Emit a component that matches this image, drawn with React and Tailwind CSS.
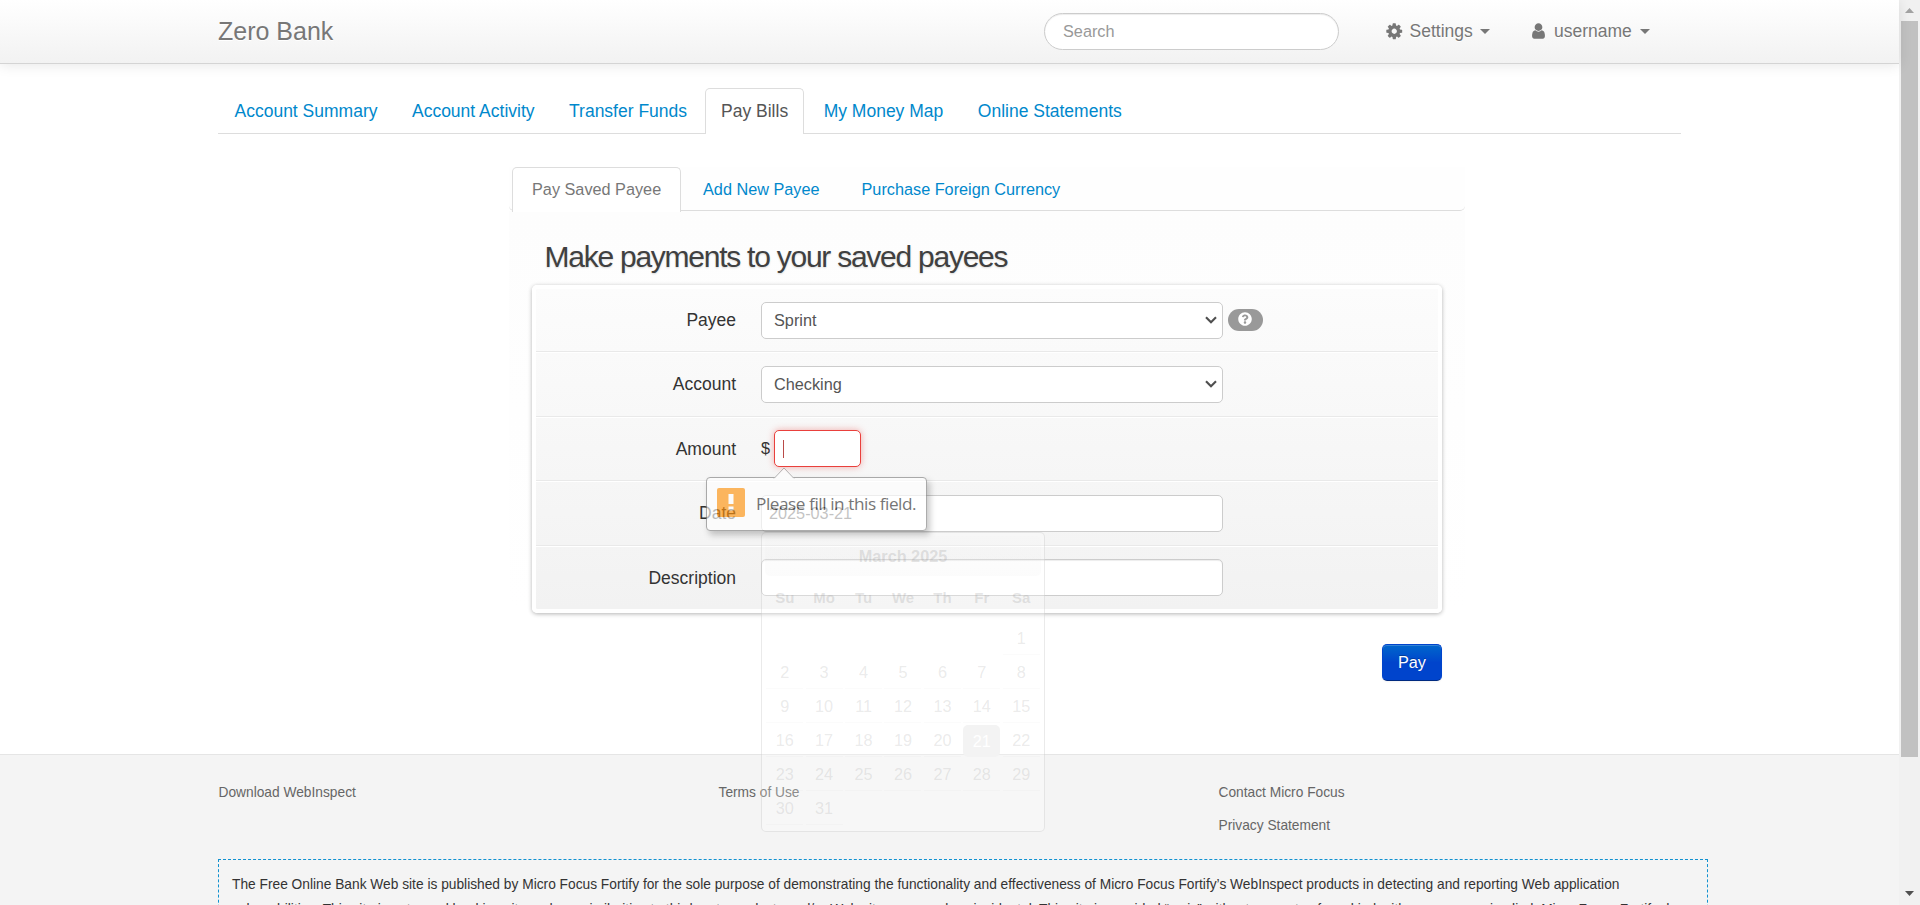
import React from "react";
import { FaQuestionCircle } from "react-icons/fa";

const days = ["Su", "Mo", "Tu", "We", "Th", "Fr", "Sa"];
const cells = [...Array(6).fill(null), ...Array.from({ length: 31 }, (_, i) => i + 1)];

const CogIcon = () => (
  <svg width="18.5" height="18.5" viewBox="0 0 1792 1792" fill="currentColor" className="shrink-0">
    <path d="M1152 896q0-106-75-181t-181-75-181 75-75 181 75 181 181 75 181-75 75-181zm512-109v222q0 12-8 23t-20 13l-185 28q-19 54-39 91 35 50 107 138 10 12 10 25t-9 23q-27 37-99 108t-94 71q-12 0-26-9l-138-108q-44 23-91 38-16 136-29 186-7 28-36 28h-222q-14 0-24.5-8.5t-11.5-21.5l-28-184q-49-16-90-37l-141 107q-10 9-25 9-14 0-25-11-126-114-165-168-7-10-7-23 0-12 8-23 15-21 51-66.5t54-70.5q-27-50-41-99l-183-27q-13-2-21-12.5t-8-23.5v-222q0-12 8-23t19-13l186-28q14-46 39-92-40-57-107-138-10-12-10-24 0-10 9-23 26-36 98.5-107.5t94.5-71.5q13 0 26 10l138 107q44-23 91-38 16-136 29-186 7-28 36-28h222q14 0 24.5 8.5t11.5 21.5l28 184q49 16 90 37l142-107q9-9 24-9 13 0 25 10 129 119 165 170 7 8 7 22 0 12-8 23-15 21-51 66.5t-54 70.5q26 50 41 98l183 28q13 2 21 12.5t8 23.5z" />
  </svg>
);

const UserIcon = () => (
  <svg width="15" height="18" viewBox="176 0 1440 1792" fill="currentColor" className="shrink-0">
    <path d="M1536 1399q0 109-62.5 187t-150.5 78h-854q-88 0-150.5-78t-62.5-187q0-85 8.5-160.5t31.5-152 58.5-131 94-89 134.5-34.5q131 128 313 128t313-128q76 0 134.5 34.5t94 89 58.5 131 31.5 152 8.5 160.5zm-256-887q0 159-112.5 271.5t-271.5 112.5-271.5-112.5-112.5-271.5 112.5-271.5 271.5-112.5 271.5 112.5 112.5 271.5z" />
  </svg>
);

const Caret = () => (
  <span className="h-0 w-0 border-x-[5px] border-t-[5px] border-x-transparent border-t-[#777]" />
);

const Chevron = () => (
  <svg width="12" height="8" viewBox="0 0 12 8" fill="none" stroke="#4f4f4f" strokeWidth="2.1">
    <path d="M1 1.2 6 6.2 11 1.2" />
  </svg>
);

function NavTab({ label, active }) {
  return (
    <li
      className={
        active
          ? "mr-[3px] h-[46px] rounded-t-[5px] border border-b-0 border-[#ddd] bg-white px-[15px] pt-[9.5px] text-[#555]"
          : "mr-[2.5px] h-[45px] border border-b-0 border-transparent pr-[14.5px] pl-[15.5px] pt-[9.5px] text-[#0088cc]"
      }
    >
      {label}
    </li>
  );
}

function SubTab({ label, active }) {
  return (
    <li
      className={
        active
          ? "h-[45px] w-[169px] rounded-t-[5px] border border-b-0 border-[#ddd] bg-white pl-[19px] pt-[9px] text-[#777]"
          : "h-[44px] border border-b-0 border-transparent pr-[19px] pl-[21px] pt-[9px] text-[#0088cc]"
      }
    >
      {label}
    </li>
  );
}

function Row({ label, first, last, children }) {
  return (
    <div
      className={
        "flex items-center " +
        (first ? "h-[63px] " : "border-t border-t-white ") +
        (first ? "" : last ? "h-[63px] " : "h-[64.5px] ") +
        (last ? "" : "border-b border-b-[#e9e9e9]")
      }
    >
      <label className="w-[200px] pt-[1px] text-right text-[17.5px] leading-[25px] text-[#333]">{label}</label>
      <div className="ml-[25px] flex items-center text-[16.25px] text-[#555]">{children}</div>
    </div>
  );
}

const Select = ({ value }) => (
  <div className="flex h-[37px] w-[462px] items-center justify-between rounded-[5px] border border-[#ccc] bg-white pr-[5px] pl-[12px]">
    <span className="pt-[1px]">{value}</span>
    <Chevron />
  </div>
);

function Calendar() {
  return (
    <div className="absolute top-[532px] left-[761px] z-10 h-[300px] w-[284px] rounded-[5px] border border-[#bbb]/30 bg-white/25 px-[3px] pt-[3px] text-[16.25px]">
      <div className="flex h-[40px] items-center justify-center rounded-[5px] bg-linear-to-b from-[#888]/1 to-[#888]/3 pt-[1px] font-bold text-[#999]/27">
        March 2025
      </div>
      <div className="mt-[3px] grid h-[37px] grid-cols-7 items-center text-center text-[15px] font-bold text-[#999]/25">
        {days.map((d) => (
          <span key={d}>{d}</span>
        ))}
      </div>
      <div className="mt-[6px] grid auto-rows-[34px] grid-cols-7 text-center">
        {cells.map((d, i) => (
          <div key={i} className="flex items-center justify-center">
            {d && (
              <span
                className={
                  d === 21
                    ? "flex h-[32px] w-[37px] items-center justify-center rounded-[5px] bg-[#f3f3f3] text-white"
                    : "flex h-[32px] w-[37px] items-center justify-center border-b border-[#888]/3 text-[#888]/18"
                }
              >
                {d}
              </span>
            )}
          </div>
        ))}
      </div>
    </div>
  );
}

function Tooltip() {
  return (
    <div className="absolute top-[477px] left-[706px] z-20 flex h-[54px] w-[221px] items-center rounded-[4px] border border-[#808080] bg-white opacity-65 shadow-[3px_4px_6px_rgba(0,0,0,0.33)]">
      <svg className="absolute top-[-11px] left-[66px]" width="22" height="12" viewBox="0 0 22 12">
        <path d="M1 11.5 11 1 21 11.5" fill="#fff" stroke="#909090" />
        <path d="M1.5 11.5h19" stroke="#fff" />
      </svg>
      <svg className="mb-[3px] ml-[10px] shrink-0" width="28" height="29" viewBox="0 0 28 29">
        <rect width="28" height="29" rx="2" fill="#ff930e" />
        <rect x="11.5" y="6" width="5" height="10" fill="#fff" />
        <rect x="11.5" y="18.5" width="5" height="4" fill="#fff" />
      </svg>
      <span className="ml-[11px] whitespace-nowrap font-['Open_Sans',sans-serif] text-[17.2px] leading-[22px] tracking-[-0.44px] text-[#2c2c2c]">
        Please fill in this field.
      </span>
    </div>
  );
}

export default function App() {
  return (
    <div className="relative flex h-[905px] w-[1920px] overflow-hidden bg-white font-['Liberation_Sans',Arial,sans-serif] text-[17.5px] leading-[25px] text-[#333]">
      <div className="flex w-[1899px] flex-col">
        <header className="relative h-[64px] shrink-0 border-b border-[#d4d4d4] bg-linear-to-b from-white to-[#f2f2f2] shadow-[0_1px_13px_rgba(0,0,0,0.1)]">
          <div className="mx-auto flex h-[62px] w-[1463px] items-center text-[#777]">
            <span className="w-[826px] text-[25px] [text-shadow:0_1px_0_#fff]">Zero Bank</span>
            <div className="mt-[1px] flex h-[37px] w-[295px] items-center rounded-full border border-[#ccc] bg-white pl-[18px] text-[16.25px] text-[#999] shadow-[inset_0_1px_1px_rgba(0,0,0,0.075)]">
              Search
            </div>
            <div className="ml-[46px] flex items-center [text-shadow:0_1px_0_#fff]">
              <CogIcon />
              <span className="ml-[6px] w-[64px]">Settings</span>
              <span className="ml-[6.5px] flex">
                <Caret />
              </span>
            </div>
            <div className="ml-[41px] flex items-center [text-shadow:0_1px_0_#fff]">
              <UserIcon />
              <span className="ml-[8px] w-[78px]">username</span>
              <span className="ml-[8px] flex">
                <Caret />
              </span>
            </div>
          </div>
        </header>

        <main className="mx-auto h-[690px] w-[1463px] shrink-0 pt-[24px]">
          <ul className="flex h-[46px] border-b border-[#ddd]">
            <NavTab label="Account Summary" />
            <NavTab label="Account Activity" />
            <NavTab label="Transfer Funds" />
            <NavTab label="Pay Bills" active />
            <NavTab label="My Money Map" />
            <NavTab label="Online Statements" />
          </ul>

          <section className="mt-[33px] ml-[291px] w-[956px]">
            <ul className="flex h-[44px] rounded-b-[5px] border-b border-[#ddd] bg-[#fefefe] pl-[3px] text-[16.25px]">
              <SubTab label="Pay Saved Payee" active />
              <SubTab label="Add New Payee" />
              <SubTab label="Purchase Foreign Currency" />
            </ul>
            <div className="bg-linear-to-b from-[#fdfdfd] to-white px-[23px] pt-[21px]">
              <h2 className="mb-[3px] h-[50px] pl-[12.5px] text-[30px] leading-[50px] tracking-[-1.25px] text-[#404040] [text-shadow:0_1px_2px_rgba(0,0,0,0.15)]">
                Make payments to your saved payees
              </h2>
              <div className="h-[328px] w-[910px] rounded-[5px] border-4 border-white bg-linear-to-b from-[#fcfcfc] to-[#f2f2f2] bg-clip-padding shadow-[0_1px_4px_rgba(0,0,0,0.3)]">
                <Row label="Payee" first>
                  <Select value="Sprint" />
                  <span className="ml-[5px] flex h-[22px] w-[35px] items-start justify-center rounded-full bg-[#999] pt-[3px] pr-[1px] text-white">
                    <FaQuestionCircle size={14} />
                  </span>
                </Row>
                <Row label="Account">
                  <Select value="Checking" />
                </Row>
                <Row label="Amount">
                  <span className="w-[13px] pb-[1px] text-[#333]">$</span>
                  <div className="flex h-[37px] w-[87px] items-center rounded-[5px] border border-[#e9403c] bg-white pl-[8px] shadow-[0_0_7px_rgba(233,60,55,0.4)]">
                    <span className="h-[18px] w-px bg-[#b94a48]" />
                  </div>
                </Row>
                <Row label="Date">
                  <div className="flex h-[37px] w-[462px] items-center rounded-[5px] border border-[#ccc] bg-white pl-[7px]">2025-03-21</div>
                </Row>
                <Row label="Description" last>
                  <div className="h-[37px] w-[462px] rounded-[5px] border border-[#ccc] bg-white shadow-[inset_0_1px_1px_rgba(0,0,0,0.075)]" />
                </Row>
              </div>
            </div>
            <button className="mt-[31px] ml-[873px] block h-[37px] w-[60px] rounded-[5px] border border-[#0044cc] border-b-[#002a80] bg-linear-to-b from-[#0066cc] to-[#0044cc] to-50% text-[16.25px] text-white shadow-[inset_0_1px_0_rgba(255,255,255,0.2),0_1px_2px_rgba(0,0,0,0.05)] [text-shadow:0_-1px_0_rgba(0,0,0,0.25)]">
              Pay
            </button>
          </section>
        </main>

        <footer className="grow border-t border-[#e5e5e5] bg-[#f4f4f4] pt-[21px] text-[13.75px]">
          <div className="ml-[218.5px] grid h-[83px] grid-cols-[500px_500px_auto] leading-[33px] text-[#666]">
            <span>Download WebInspect</span>
            <span>Terms of Use</span>
            <div className="flex flex-col">
              <span>Contact Micro Focus</span>
              <span>Privacy Statement</span>
            </div>
          </div>
          <div className="ml-[218px] h-[120px] w-[1490px] border border-dashed border-[#1191d0] px-[13px] pt-[12px] leading-[25px] whitespace-nowrap text-[#333]">
            <p>
              The Free Online Bank Web site is published by Micro Focus Fortify for the sole purpose of demonstrating the functionality and effectiveness of Micro Focus Fortify’s WebInspect products in detecting and reporting Web application
            </p>
            <p>
              vulnerabilities. This site is not a real banking site and any similarities to third party products and/or Web sites are purely coincidental. This site is provided “as is” without warranty of any kind, either express or implied. Micro Focus Fortify does
            </p>
          </div>
        </footer>
      </div>

      <aside className="flex w-[21px] flex-col items-center bg-[#f1f1f1]">
        <svg className="shrink-0" width="21" height="21" viewBox="0 0 21 21">
          <path d="M6 13h9l-4.5-5z" fill="#a3a3a3" />
        </svg>
        <div className="h-[736px] w-[17px] bg-[#c1c1c1]" />
        <svg className="mt-auto shrink-0" width="21" height="21" viewBox="0 0 21 21">
          <path d="M6 7h9l-4.5 5z" fill="#505050" />
        </svg>
      </aside>

      <Calendar />
      <Tooltip />
    </div>
  );
}
